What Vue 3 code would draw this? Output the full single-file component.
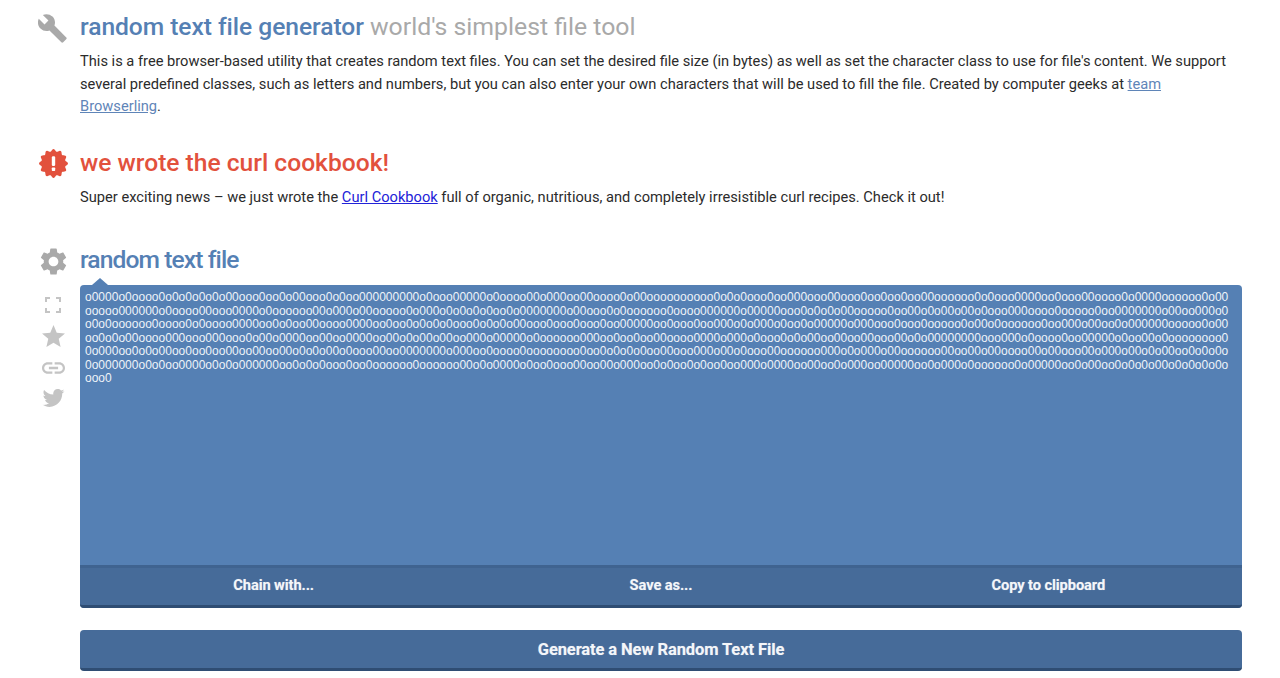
<template>
  <div class="page">
    <section class="block">
      <div class="side">
        <svg class="icon wrench" viewBox="1 1 23 23"><path :d="paths.wrench" /></svg>
      </div>
      <div class="main">
        <h1 class="title"><span class="blue slim">random text file generator</span> <span class="grey">world's simplest file tool</span></h1>
        <p class="desc">This is a free browser-based utility that creates random text files. You can set the desired file size (in bytes) as well as set the character class to use for file's content. We support several predefined classes, such as letters and numbers, but you can also enter your own characters that will be used to fill the file. Created by computer geeks at <a class="soft" href="#">team Browserling</a>.</p>
      </div>
    </section>

    <section class="block news">
      <div class="side">
        <svg class="icon badge" viewBox="0 0 24 24">
          <polygon :points="badgePoints" fill="#e2513d" />
          <rect x="10.6" y="6" width="2.8" height="8" rx="1" fill="#fff" />
          <rect x="10.6" y="15.4" width="2.8" height="2.8" rx="0.6" fill="#fff" />
        </svg>
      </div>
      <div class="main">
        <h2 class="title red">we wrote the curl cookbook!</h2>
        <p class="desc">Super exciting news – we just wrote the <a href="#">Curl Cookbook</a> full of organic, nutritious, and completely irresistible curl recipes. Check it out!</p>
      </div>
    </section>

    <section class="block tool">
      <div class="side">
        <svg class="icon gear" viewBox="2 2 20 20"><path :d="paths.gear" /></svg>
        <svg class="small full" viewBox="0 0 16 16">
          <path d="M1 5V1h4M11 1h4v4M15 11v4h-4M5 15H1v-4" fill="none" stroke="#c4c4c4" stroke-width="2" />
        </svg>
        <svg class="small star" viewBox="2 2 20 19"><path :d="paths.star" /></svg>
        <svg class="small link" viewBox="2 6 20 12"><path :d="paths.link" /></svg>
        <svg class="small bird" viewBox="1 3.5 22 18"><path :d="paths.bird" /></svg>
      </div>
      <div class="main">
        <h2 class="title blue tight">random text file</h2>
        <div class="panel">
          <span class="arrow"></span>
          <div class="output">{{ output }}</div>
          <div class="actions">
            <button v-for="a in actions" :key="a" class="action">{{ a }}</button>
          </div>
        </div>
        <button class="generate">Generate a New Random Text File</button>
      </div>
    </section>
  </div>
</template>

<script setup>
import { computed } from 'vue'

const paths = {
  wrench: 'M22.7 19l-9.1-9.1c.9-2.3.4-5-1.5-6.9-2-2-5-2.4-7.4-1.3L9 6 6 9 1.6 4.7C.4 7.1.9 10.1 2.9 12.1c1.9 1.9 4.6 2.4 6.9 1.5l9.1 9.1c.4.4 1 .4 1.4 0l2.3-2.3c.5-.4.5-1.1.1-1.4z',
  gear: 'M19.14 12.94c.04-.3.06-.61.06-.94 0-.32-.02-.64-.07-.94l2.03-1.58c.18-.14.23-.41.12-.61l-1.92-3.32c-.12-.22-.37-.29-.59-.22l-2.39.96c-.5-.38-1.03-.7-1.62-.94l-.36-2.54c-.04-.24-.24-.41-.48-.41h-3.84c-.24 0-.43.17-.47.41l-.36 2.54c-.59.24-1.13.57-1.62.94l-2.39-.96c-.22-.08-.47 0-.59.22L2.74 8.87c-.12.21-.08.47.12.61l2.03 1.58c-.05.3-.09.63-.09.94s.02.64.07.94l-2.03 1.58c-.18.14-.23.41-.12.61l1.92 3.32c.12.22.37.29.59.22l2.39-.96c.5.38 1.03.7 1.62.94l.36 2.54c.05.24.24.41.48.41h3.84c.24 0 .44-.17.47-.41l.36-2.54c.59-.24 1.13-.56 1.62-.94l2.39.96c.22.08.47 0 .59-.22l1.92-3.32c.12-.22.07-.47-.12-.61l-2.01-1.58zM12 15.6c-1.98 0-3.6-1.62-3.6-3.6s1.62-3.6 3.6-3.6 3.6 1.62 3.6 3.6-1.62 3.6-3.6 3.6z',
  star: 'M12 17.27L18.18 21l-1.64-7.03L22 9.24l-7.19-.61L12 2 9.19 8.63 2 9.24l5.46 4.73L5.82 21z',
  link: 'M3.9 12c0-1.71 1.39-3.1 3.1-3.1h4V7H7c-2.76 0-5 2.24-5 5s2.24 5 5 5h4v-1.9H7c-1.71 0-3.1-1.39-3.1-3.1zM8 13h8v-2H8v2zm9-6h-4v1.9h4c1.71 0 3.1 1.39 3.1 3.1s-1.39 3.1-3.1 3.1h-4V17h4c2.76 0 5-2.24 5-5s-2.24-5-5-5z',
  bird: 'M22.46 6c-.77.35-1.6.58-2.46.69.88-.53 1.56-1.37 1.88-2.38-.83.5-1.75.85-2.72 1.05C18.37 4.5 17.26 4 16 4c-2.35 0-4.27 1.92-4.27 4.29 0 .34.04.67.11.98C8.28 9.09 5.11 7.38 3 4.79c-.37.63-.58 1.37-.58 2.15 0 1.49.75 2.81 1.91 3.56-.71 0-1.37-.2-1.95-.5v.03c0 2.08 1.48 3.82 3.44 4.21a4.22 4.22 0 0 1-1.93.07 4.28 4.28 0 0 0 4 2.98 8.521 8.521 0 0 1-5.33 1.84c-.34 0-.68-.02-1.02-.06C3.44 20.29 5.7 21 8.12 21 16 21 20.33 14.46 20.33 8.79c0-.19 0-.37-.01-.56.84-.6 1.56-1.36 2.14-2.23z'
}

const actions = ['Chain with...', 'Save as...', 'Copy to clipboard']

// scalloped badge outline, 12 bumps
const badgePoints = computed(() => {
  const pts = []
  for (let i = 0; i < 120; i++) {
    const a = (i / 120) * Math.PI * 2
    const r = 11 + 1 * Math.cos(a * 12)
    pts.push((12 + r * Math.sin(a)).toFixed(2) + ',' + (12 - r * Math.cos(a)).toFixed(2))
  }
  return pts.join(' ')
})

const rows = [
  'o0000o0oooo0o0o0o0o0o00ooo0oo0o00ooo0o0oo000000000o0ooo00000o0oooo00o000oo00oooo0o00oooooooooo0o0o0ooo0oo000ooo00ooo0oo0oo0oo00oooooo0o0ooo0000oo0ooo00oooo0o0000oooooo0o00ooo',
  'ooooo000000o0oooo00ooo0000o0oooooo00o000o00ooooo0o000o0o0o0o0oo0o0000000o00ooo0o0oooooo0oooo000000o00000ooo0o0o0o00ooooo0oo00o0o00o00o0ooo000oooo0ooooo0oo0000000o00oo000o0o0o',
  'o0o0oooooo0oooo0o0oooo0000oo0o0oo00oooo0000oo0oo0o0o0o0ooo0o0o0o00ooo0ooo0ooo0oo00000oo0ooo0oo000o0o000o0oo0o00000o000ooo0ooo0ooooo0o00o0oooooo0oo000o00oo0o000000ooooo0o000o',
  'oo0o0o00oooo000ooo000ooo0o00o0000oo00oo0000oo00o0o00o00oo000o00000o0oooooo000oo0oo0oo00oooo0000o000o0ooo0o0o00oo00oo00ooo00o0o00000000ooo000o0oooo0oo00000o0oo00o0oooooooo0o',
  '0o000oo0o0o00oo0oo0oo00oo00oo00o0o0o00o0ooo00oo0000000o000oo0oooo0oooooooo0oo0o0o0o0oo00ooo000o00o0ooo00oooooo000o0o000o00oooooo00oo00o00oooo00o00ooo00o000o00o0o00o',
  '0o000000o0o0oo0000o0o0o000000oo0o0o0ooo0oo0oooooo0oooooo00o0o0000o0oo0ooo00oo00o000oo0o0oo0o0oo0oo000o0000oo00oo0o000oo00000oo0o000o0oooooo0o00000oo0o00oo0o0o0o00o0o0',
  'ooo0'
]
const output = rows.map((r, i) => (i < 6 ? r.padEnd(171, 'o0').slice(0, 171) : r)).join('\n')
</script>

<style scoped>
.page {
  padding: 13px 38px 0;
  font-family: Roboto, "Liberation Sans", sans-serif;
  color: #2b2b2b;
}
.block {
  display: flex;
  gap: 12px;
}
.news {
  margin-top: 31px;
}
.tool {
  margin-top: 38px;
}
.side {
  width: 30px;
  flex: none;
  display: flex;
  flex-direction: column;
  align-items: center;
}
.main {
  flex: 1;
  min-width: 0;
}
.icon, .small {
  display: block;
  fill: #a9a9a9;
}
.wrench {
  width: 30px;
  height: 30px;
  margin-top: 1px;
}
.badge {
  width: 29px;
  height: 29px;
}
.gear {
  width: 27px;
  height: 27px;
  margin-top: 2px;
}
.small {
  fill: #c4c4c4;
}
.full {
  width: 16px;
  height: 16px;
  margin-top: 22px;
}
.star {
  width: 23px;
  height: 22px;
  margin-top: 12px;
}
.link {
  width: 23px;
  height: 14px;
  margin-top: 14px;
}
.bird {
  width: 23px;
  height: 20px;
  margin-top: 13px;
}
.title {
  margin: 0;
  font-size: 24.6px;
  font-weight: 500;
  line-height: 28px;
}
.tight {
  letter-spacing: -0.9px;
}
.slim {
  letter-spacing: -0.05px;
}
.blue {
  color: #5580b4;
}
.grey {
  color: #a9a9a9;
  font-size: 24.8px;
  font-weight: 400;
}
.red {
  color: #e2513d;
}
.desc {
  margin: 9px 0 0;
  font-size: 14.67px;
  line-height: 22.5px;
}
.desc a {
  color: #2222d8;
}
.desc a.soft {
  color: #5f85b8;
}
.panel {
  position: relative;
  margin-top: 11px;
  background: #5580b4;
  border-radius: 4px;
}
.arrow {
  position: absolute;
  top: -7px;
  left: 12px;
  width: 0;
  height: 0;
  border-left: 8px solid transparent;
  border-right: 8px solid transparent;
  border-bottom: 7px solid #5580b4;
}
.output {
  height: 280px;
  box-sizing: border-box;
  padding: 6px 5px;
  font-family: "Liberation Sans", Arial, sans-serif;
  font-size: 12px;
  letter-spacing: 0.012px;
  line-height: 13.5px;
  color: #eef3f9;
  white-space: pre;
  overflow: hidden;
}
.actions {
  display: grid;
  grid-template-columns: repeat(3, 1fr);
  background: #466b99;
  border-top: 3px solid #3f6390;
  border-bottom: 3px solid #2f4d73;
  border-radius: 0 0 4px 4px;
}
.action, .generate {
  border: 0;
  background: none;
  font-family: Roboto, "Liberation Sans", sans-serif;
  font-weight: 700;
  color: #f4f6f9;
  text-shadow: 0 0 1px rgba(255, 255, 255, 0.4);
  letter-spacing: -0.1px;
}
.action {
  height: 37px;
  padding: 0 0 4px;
  font-size: 14.67px;
}
.generate {
  display: block;
  width: 100%;
  height: 41px;
  margin-top: 22px;
  background: #466b99;
  border-bottom: 3px solid #2f4d73;
  border-radius: 4px;
  font-size: 16.5px;
}
</style>

<style>
html, body {
  background: #fff;
}
</style>
